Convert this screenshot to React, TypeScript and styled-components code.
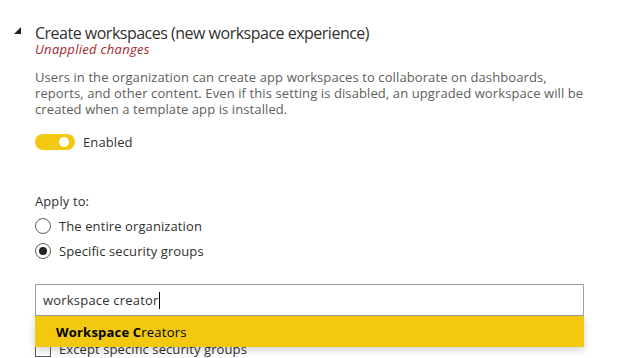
import styled, { createGlobalStyle } from "styled-components";

const GlobalStyle = createGlobalStyle`
  html, body {
    margin: 0;
    padding: 0;
    background: #ffffff;
  }
  body {
    font-family: "Open Sans", "Noto Sans", sans-serif;
    color: #252423;
    overflow: hidden;
  }
`;

const Page = styled.div`
  width: 639px;
  height: 358px;
  overflow: hidden;
  background: #ffffff;
  padding: 24px 0 0 14px;
  box-sizing: border-box;
`;

const Header = styled.div`
  display: flex;
  align-items: flex-start;
  gap: 14px;
`;

const Caret = styled.span`
  width: 0;
  height: 0;
  margin-top: 3px;
  border-style: solid;
  border-width: 0 0 7px 7px;
  border-color: transparent transparent #252423 transparent;
`;

const Body = styled.div`
  padding-left: 21px;
  width: 549px;
`;

const Title = styled.div`
  font-size: 16px;
  line-height: 18px;
  color: #323130;
  letter-spacing: -0.5px;
`;

const Unapplied = styled.div`
  font-size: 13px;
  line-height: 13px;
  font-style: italic;
  color: #a4262c;
  letter-spacing: 0.3px;
  margin-top: 1px;
`;

const Description = styled.p`
  margin: 13px 0 0;
  font-size: 13px;
  line-height: 16px;
  color: #605e5c;
  letter-spacing: 0.1px;
  width: 600px;
`;

const ToggleRow = styled.label`
  display: flex;
  align-items: center;
  gap: 8px;
  margin-top: 16px;
  font-size: 13px;
  color: #323130;
  letter-spacing: 0.1px;
`;

const Toggle = styled.span<{ $on: boolean }>`
  position: relative;
  width: 40px;
  height: 16px;
  border-radius: 8px;
  background: ${(p) => (p.$on ? "#f2c811" : "#ffffff")};
  &::after {
    content: "";
    position: absolute;
    top: 3px;
    ${(p) => (p.$on ? "right: 6px;" : "left: 6px;")}
    width: 10px;
    height: 10px;
    border-radius: 50%;
    background: #ffffff;
  }
`;

const SectionLabel = styled.div`
  margin-top: 41px;
  font-size: 13px;
  line-height: 18px;
  color: #323130;
  letter-spacing: 0.1px;
`;

const Options = styled.div`
  display: flex;
  flex-direction: column;
  gap: 7px;
  margin-top: 7px;
`;

const OptionRow = styled.label`
  display: flex;
  align-items: center;
  gap: 8px;
  font-size: 13px;
  line-height: 18px;
  color: #323130;
  letter-spacing: 0.1px;
`;

const Radio = styled.span<{ $checked: boolean }>`
  width: 14px;
  height: 14px;
  border-radius: 50%;
  border: 1px solid #605e5c;
  display: flex;
  align-items: center;
  justify-content: center;
  &::after {
    content: "";
    width: 8px;
    height: 8px;
    border-radius: 50%;
    background: ${(p) => (p.$checked ? "#252423" : "transparent")};
  }
`;

const PickerWrap = styled.div`
  position: relative;
  margin-top: 24px;
  width: 549px;
`;

const SearchBox = styled.div`
  height: 30px;
  border: 1px solid #a19f9d;
  display: flex;
  align-items: center;
  padding-left: 7px;
  font-size: 13px;
  color: #323130;
  letter-spacing: 0.2px;
  background: #ffffff;
`;

const Cursor = styled.span`
  display: inline-block;
  width: 1px;
  height: 17px;
  background: #000000;
  vertical-align: middle;
`;

const Suggestions = styled.div`
  position: absolute;
  left: 0;
  right: 0;
  top: 32px;
  z-index: 2;
  box-shadow: 0 3px 8px rgba(0, 0, 0, 0.18);
`;

const Suggestion = styled.div`
  height: 31px;
  background: #f2c811;
  display: flex;
  align-items: center;
  padding-left: 21px;
  font-size: 13px;
  color: #000000;
  letter-spacing: 0.2px;
  b {
    font-weight: 700;
  }
`;

const CheckRow = styled(OptionRow)`
  margin-top: 24px;
`;

const Checkbox = styled.span`
  width: 14px;
  height: 14px;
  border: 1px solid #605e5c;
  box-sizing: content-box;
`;

export default function App() {
  return (
    <>
      <GlobalStyle />
      <Page>
        <Header>
          <Caret />
          <div>
            <Title>Create workspaces (new workspace experience)</Title>
            <Unapplied>Unapplied changes</Unapplied>
          </div>
        </Header>
        <Body>
          <Description>
            Users in the organization can create app workspaces to collaborate on dashboards,
            <br />
            reports, and other content. Even if this setting is disabled, an upgraded workspace will be
            <br />
            created when a template app is installed.
          </Description>
          <ToggleRow>
            <Toggle $on />
            Enabled
          </ToggleRow>
          <SectionLabel>Apply to:</SectionLabel>
          <Options>
            <OptionRow>
              <Radio $checked={false} />
              The entire organization
            </OptionRow>
            <OptionRow>
              <Radio $checked />
              Specific security groups
            </OptionRow>
          </Options>
          <PickerWrap>
            <SearchBox>
              workspace creator
              <Cursor />
            </SearchBox>
            <Suggestions>
              <Suggestion>
                <b>Workspace C</b>reators
              </Suggestion>
            </Suggestions>
            <CheckRow>
              <Checkbox />
              Except specific security groups
            </CheckRow>
          </PickerWrap>
        </Body>
      </Page>
    </>
  );
}
